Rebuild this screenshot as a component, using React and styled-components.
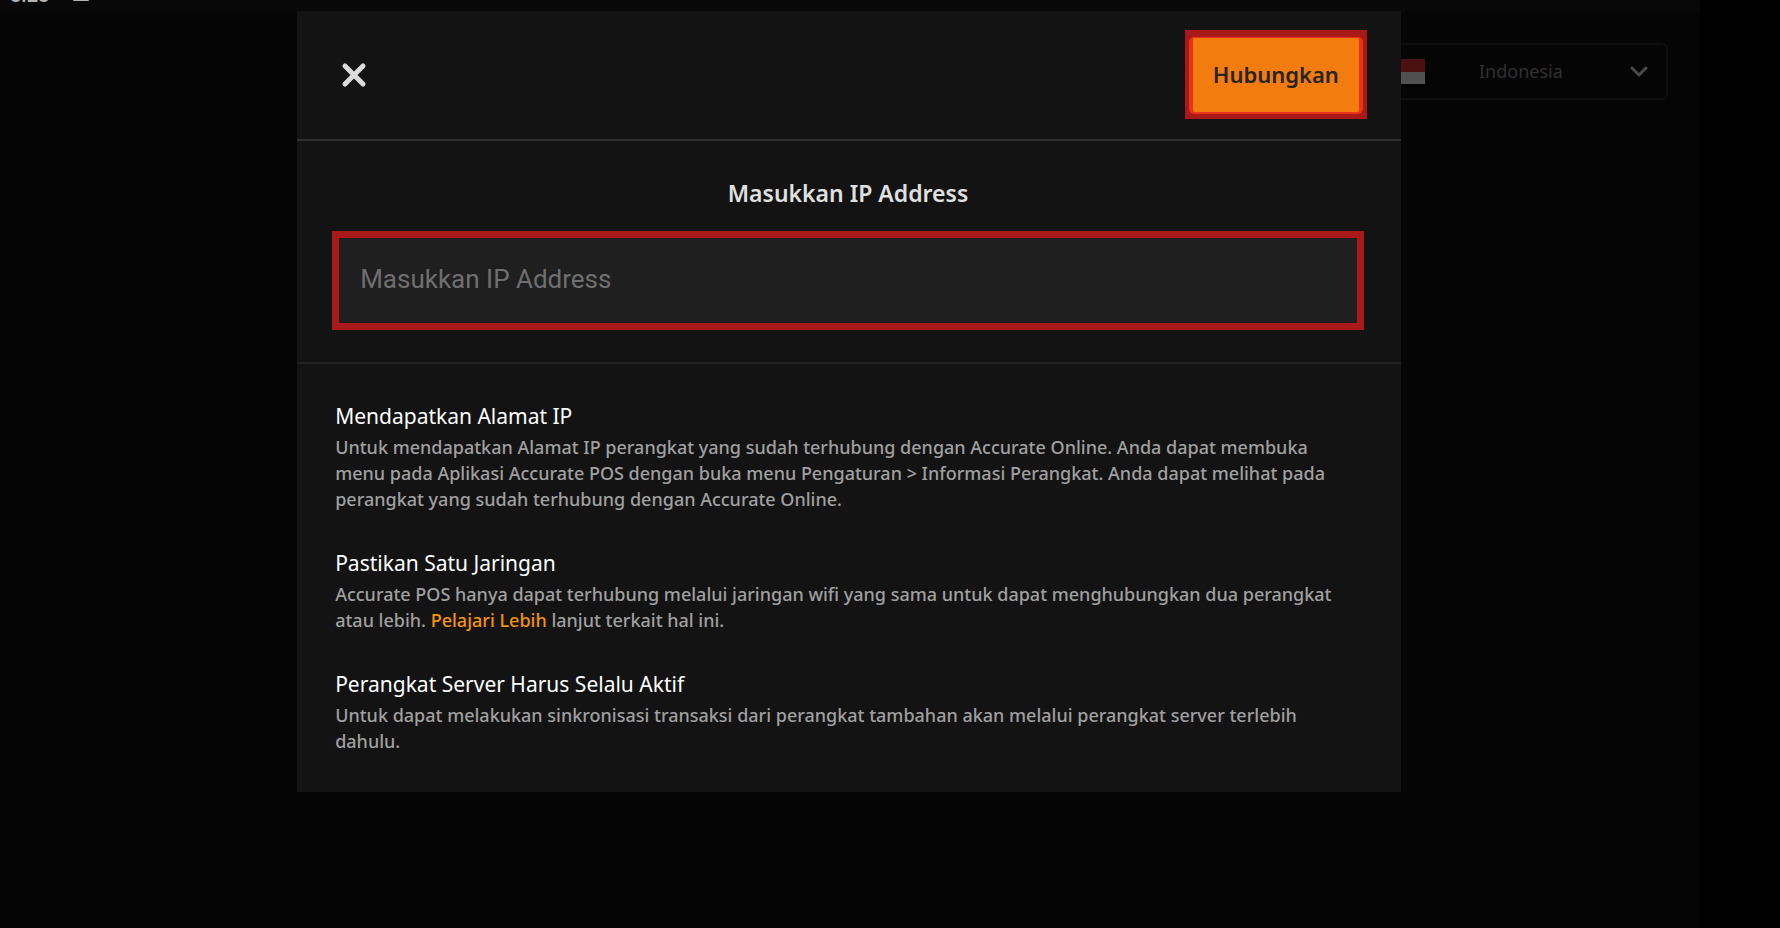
import { useState } from 'react';
import styled, { createGlobalStyle } from 'styled-components';

const GlobalStyle = createGlobalStyle`
    * {
        box-sizing: border-box;
    }

    body {
        margin: 0;
        background-color: #000;
        font-family: 'Noto Sans', 'Open Sans', sans-serif;
    }
`;

const Device = styled.div`
    position: relative;
    min-height: 100vh;
    display: flex;
    background-color: #000;
`;

const Screen = styled.div`
    flex: 1;
    display: flex;
    flex-direction: column;
    background-color: #050505;
`;

const NavigationBar = styled.div`
    width: 80px;
    background-color: #000;
`;

const StatusBar = styled.div`
    display: flex;
    align-items: flex-end;
    gap: 24px;
    height: 11px;
    padding: 0 10px 6px;
    overflow: hidden;
    background-color: #080808;
    color: #b4b4b4;
    font-family: Roboto, sans-serif;
    font-size: 20px;
    font-weight: 500;
    line-height: 20px;
`;

const TopBar = styled.div`
    display: flex;
    justify-content: flex-end;
    padding: 32px 32px 0;
`;

const LanguageBox = styled.label`
    display: flex;
    align-items: center;
    width: 294px;
    height: 57px;
    padding: 0 18px 0 12px;
    border: 2px solid #0f0f0f;
    border-radius: 6px;
`;

const Flag = styled.svg`
    flex: none;
    width: 37px;
    height: 25px;
`;

const LanguageSelect = styled.select`
    flex: 1;
    min-width: 0;
    height: 40px;
    padding: 0 0 2px 54px;
    border: 0;
    appearance: none;
    background: transparent;
    color: #303030;
    font-family: inherit;
    font-size: 18px;
`;

const Chevron = styled.svg`
    flex: none;
    width: 18px;
    height: 12px;
`;

const Overlay = styled.div`
    position: absolute;
    inset: 0;
    display: flex;
    justify-content: center;
    align-items: flex-start;
    padding: 11px 82px 0 0;
`;

const Dialog = styled.form`
    width: 65%;
    max-width: 1104px;
    background-color: #131313;
`;

const DialogHeader = styled.header`
    display: flex;
    align-items: center;
    justify-content: space-between;
    height: 130px;
    padding: 0 34px 2px 36px;
    border-bottom: 2px solid #303030;
`;

const CloseButton = styled.button`
    display: flex;
    padding: 9px 8px 7px;
    border: 0;
    background: transparent;
    cursor: pointer;
`;

const ButtonFrame = styled.div`
    padding: 7px 4px 5px;
    background-color: #a91919;
`;

const ConnectButton = styled.button`
    width: 174px;
    height: 77px;
    padding: 0 6px 2px;
    border: solid #e93318;
    border-width: 1px 4px 2px;
    border-radius: 5px;
    background-color: #f27d0e;
    color: #272320;
    font-family: inherit;
    font-size: 22px;
    font-weight: 600;
    cursor: pointer;
`;

const AddressSection = styled.section`
    padding: 34px 37px 32px 35px;
    border-bottom: 2px solid #222;
`;

const AddressLabel = styled.label`
    display: block;
    margin-bottom: 20px;
    color: #e0e0e0;
    font-size: 23px;
    font-weight: 600;
    line-height: 36px;
    text-align: center;
`;

const AddressInput = styled.input`
    display: block;
    width: 100%;
    height: 99px;
    padding: 0 21px 3px;
    border: 7px solid #a91919;
    border-radius: 0;
    outline: none;
    background-color: #1f1f1f;
    color: #e0e0e0;
    font-family: Roboto, sans-serif;
    font-size: 26px;

    &::placeholder {
        color: #6f6f6f;
    }
`;

const HelpSection = styled.section`
    display: flex;
    flex-direction: column;
    gap: 37px;
    padding: 38px 60px 38px 38px;
`;

const HelpTitle = styled.h2`
    margin: 0 0 4px;
    color: #fff;
    font-size: 21px;
    font-weight: 400;
    line-height: 28px;
`;

const HelpText = styled.p`
    margin: 0;
    color: #a0a0a0;
    font-size: 18px;
    font-weight: 500;
    line-height: 26px;
`;

const HelpLink = styled.a`
    color: #f59300;
    text-decoration: none;
`;

const helpItems = [
    {
        title: 'Mendapatkan Alamat IP',
        text: 'Untuk mendapatkan Alamat IP perangkat yang sudah terhubung dengan Accurate Online. Anda dapat membuka menu pada Aplikasi Accurate POS dengan buka menu Pengaturan > Informasi Perangkat. Anda dapat melihat pada perangkat yang sudah terhubung dengan Accurate Online.',
    },
    {
        title: 'Pastikan Satu Jaringan',
        text: (
            <>
                Accurate POS hanya dapat terhubung melalui jaringan wifi yang sama untuk dapat menghubungkan dua perangkat atau lebih.{' '}
                <HelpLink href="#pelajari">Pelajari Lebih</HelpLink> lanjut terkait hal ini.
            </>
        ),
    },
    {
        title: 'Perangkat Server Harus Selalu Aktif',
        text: 'Untuk dapat melakukan sinkronisasi transaksi dari perangkat tambahan akan melalui perangkat server terlebih dahulu.',
    },
];

function LanguagePicker() {
    return (
        <LanguageBox>
            <Flag viewBox="0 0 37 25" aria-hidden="true">
                <rect width="37" height="13" fill="#4b1010" />
                <rect y="13" width="37" height="12" fill="#505050" />
            </Flag>
            <LanguageSelect aria-label="Bahasa" defaultValue="id">
                <option value="id">Indonesia</option>
                <option value="en">English</option>
            </LanguageSelect>
            <Chevron viewBox="0 0 18 12" fill="none" aria-hidden="true">
                <path d="M2 2l7 7 7-7" stroke="#4a4a4a" strokeWidth="3" strokeLinecap="round" />
            </Chevron>
        </LanguageBox>
    );
}

function ConnectDialog() {
    const [address, setAddress] = useState('');

    return (
        <Dialog onSubmit={(e) => e.preventDefault()}>
            <DialogHeader>
                <CloseButton type="button" aria-label="Tutup">
                    <svg width="26" height="26" viewBox="0 0 26 26" fill="none">
                        <path d="M4 4l18 18M22 4l-18 18" stroke="#dcdcdc" strokeWidth="5" strokeLinecap="round" />
                    </svg>
                </CloseButton>
                <ButtonFrame>
                    <ConnectButton type="submit">Hubungkan</ConnectButton>
                </ButtonFrame>
            </DialogHeader>
            <AddressSection>
                <AddressLabel htmlFor="ip-address">Masukkan IP Address</AddressLabel>
                <AddressInput
                    id="ip-address"
                    type="text"
                    placeholder="Masukkan IP Address"
                    value={address}
                    onChange={(e) => setAddress(e.target.value)}
                />
            </AddressSection>
            <HelpSection>
                {
                    helpItems.map((item) => (
                        <div key={item.title}>
                            <HelpTitle>{item.title}</HelpTitle>
                            <HelpText>{item.text}</HelpText>
                        </div>
                    ))
                }
            </HelpSection>
        </Dialog>
    );
}

function App() {
    return (
        <>
            <GlobalStyle />
            <Device>
                <Screen>
                    <StatusBar>
                        <span>8:28</span>
                        <svg width="16" height="20" viewBox="0 0 16 20" aria-hidden="true">
                            <rect y="2" width="16" height="14" rx="1" fill="#b4b4b4" />
                        </svg>
                    </StatusBar>
                    <TopBar>
                        <LanguagePicker />
                    </TopBar>
                </Screen>
                <NavigationBar />
                <Overlay>
                    <ConnectDialog />
                </Overlay>
            </Device>
        </>
    );
}

export default App;
